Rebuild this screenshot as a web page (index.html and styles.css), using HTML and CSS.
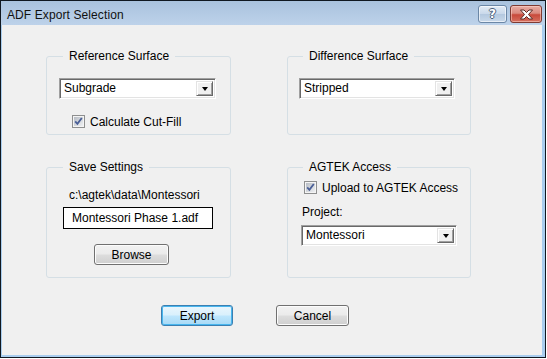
FILE: index.html
```html
<!DOCTYPE html>
<html>
<head>
<meta charset="utf-8">
<link rel="stylesheet" href="styles.css">
</head>
<body>
<div class="window">
  <div class="titlebar">
    <span class="title">ADF Export Selection</span>
    <div class="tb-buttons">
      <div class="tb-help"><span>?</span></div>
      <div class="tb-close">
        <svg width="15" height="11" viewBox="0 0 15 11"><path d="M1.5 1 H5 L7.5 3.5 L10 1 H13.5 L9.5 5.5 L13.5 10 H10 L7.5 7.5 L5 10 H1.5 L5.5 5.5 Z" fill="#fff" stroke="#5a2a24" stroke-width="1" stroke-linejoin="round"/></svg>
      </div>
    </div>
  </div>
  <div class="client">
    <div class="groups">
      <fieldset class="group">
        <legend>Reference Surface</legend>
        <div class="combo combo-ref"><span class="combo-text">Subgrade</span><span class="combo-btn"><i class="arrow"></i></span></div>
        <label class="check check-cutfill"><span class="box"><svg width="13" height="13" viewBox="0 0 13 13"><rect x="0.5" y="0.5" width="12" height="12" fill="#f4f4f4" stroke="#8e8f8f"/><rect x="2" y="2" width="9" height="9" fill="url(#g1)"/><defs><linearGradient id="g1" x1="0" y1="0" x2="1" y2="1"><stop offset="0" stop-color="#b7bcc4"/><stop offset="1" stop-color="#eef0f2"/></linearGradient></defs><path d="M3.2 6.4 L5.4 8.8 L9.8 3" fill="none" stroke="#4a5f97" stroke-width="1.8"/></svg></span>Calculate Cut-Fill</label>
      </fieldset>
      <fieldset class="group group-right">
        <legend>Difference Surface</legend>
        <div class="combo combo-diff"><span class="combo-text">Stripped</span><span class="combo-btn"><i class="arrow"></i></span></div>
      </fieldset>
      <fieldset class="group">
        <legend>Save Settings</legend>
        <div class="path">c:\agtek\data\Montessori</div>
        <div class="textbox">Montessori Phase 1.adf</div>
        <button class="btn btn-browse">Browse</button>
      </fieldset>
      <fieldset class="group group-right">
        <legend>AGTEK Access</legend>
        <label class="check check-upload"><span class="box"><svg width="13" height="13" viewBox="0 0 13 13"><rect x="0.5" y="0.5" width="12" height="12" fill="#f4f4f4" stroke="#8e8f8f"/><rect x="2" y="2" width="9" height="9" fill="url(#g2)"/><defs><linearGradient id="g2" x1="0" y1="0" x2="1" y2="1"><stop offset="0" stop-color="#b7bcc4"/><stop offset="1" stop-color="#eef0f2"/></linearGradient></defs><path d="M3.2 6.4 L5.4 8.8 L9.8 3" fill="none" stroke="#4a5f97" stroke-width="1.8"/></svg></span>Upload to AGTEK Access</label>
        <div class="project-label">Project:</div>
        <div class="combo combo-proj"><span class="combo-text">Montessori</span><span class="combo-btn"><i class="arrow"></i></span></div>
      </fieldset>
    </div>
    <div class="actions">
      <button class="btn btn-default">Export</button>
      <button class="btn btn-cancel">Cancel</button>
    </div>
  </div>
</div>
</body>
</html>
```
FILE: styles.css
```css
* { box-sizing: border-box; }
html, body { margin: 0; padding: 0; background: #ffffff; }
body {
  font-family: "Liberation Sans", Arial, sans-serif;
  font-size: 12px;
  color: #000;
}
.window {
  width: 546px;
  height: 358px;
  border: 1px solid #101820;
  background: linear-gradient(#a9c2dd 0px, #bdd2ea 24px, #a9cdee 24px);
  padding: 0 3px 2px 1px;
  display: flex;
  flex-direction: column;
}
.titlebar {
  height: 24px;
  flex: none;
  display: flex;
  align-items: center;
  justify-content: space-between;
}
.title {
  font-size: 12px;
  letter-spacing: 0.1px;
  padding-left: 5px;
  padding-top: 3px;
  color: #111;
}
.tb-buttons {
  display: flex;
  gap: 3px;
  margin-top: 2px;
}
.tb-help {
  width: 29px;
  height: 18px;
  border: 1px solid #6b87a6;
  border-radius: 3px;
  background: linear-gradient(#e3ecf5 0%, #c8d8ea 50%, #b3c8df 51%, #c9d9ea 100%);
  box-shadow: inset 0 0 0 1px rgba(255,255,255,0.6);
  display: flex;
  align-items: center;
  justify-content: center;
}
.tb-help span {
  font-family: "DejaVu Sans", sans-serif;
  font-weight: bold;
  font-size: 12px;
  color: #fff;
  text-shadow: 1px 0 0 #4a5f7a, -1px 0 0 #4a5f7a, 0 1px 0 #4a5f7a, 0 -1px 0 #4a5f7a;
  line-height: 1;
}
.tb-close {
  width: 32px;
  height: 18px;
  border: 1px solid #7e3a32;
  border-radius: 3px;
  background: linear-gradient(#e9aca3 0%, #d98a7f 45%, #c8493b 55%, #d5705f 100%);
  box-shadow: inset 0 0 0 1px rgba(255,220,210,0.5);
  display: flex;
  align-items: center;
  justify-content: center;
}
.client {
  flex: 1;
  background: #f0f0f0;
  padding: 24px 0 0 44px;
}
.groups {
  display: grid;
  grid-template-columns: 185px 184px;
  grid-template-rows: 86px 118px;
  column-gap: 56px;
  row-gap: 25px;
}
.group {
  margin: 0;
  padding: 0;
  border: 1px solid #d5dfe5;
  border-radius: 3px;
  height: 100%;
  min-width: 0;
}
.group legend {
  margin-left: 16px;
  padding: 0 6px;
  line-height: 14px;
  height: 14px;
}
.group-right legend { margin-left: 15px; }

.combo {
  height: 21px;
  display: flex;
  background: #fff;
  border-top: 1px solid #a0a0a0;
  border-left: 1px solid #a0a0a0;
  border-bottom: 1px solid #fff;
  border-right: 1px solid #fff;
  box-shadow: inset 1px 1px 0 #696969, inset -1px -1px 0 #e3e3e3;
  padding: 2px;
}
.combo-text {
  flex: 1;
  padding-left: 2px;
  line-height: 15px;
}
.combo-btn {
  width: 17px;
  background: #f0f0f0;
  border-top: 1px solid #e3e3e3;
  border-left: 1px solid #e3e3e3;
  border-right: 1px solid #696969;
  border-bottom: 1px solid #696969;
  box-shadow: inset 1px 1px 0 #fff, inset -1px -1px 0 #a0a0a0;
  display: flex;
  align-items: center;
  justify-content: center;
}
.arrow {
  width: 0;
  height: 0;
  border-left: 3.5px solid transparent;
  border-right: 3.5px solid transparent;
  border-top: 4px solid #000;
  margin-top: 1px;
}
.combo-ref { margin: 15px 0 0 12px; width: 157px; }
.combo-diff { margin: 15px 0 0 11px; width: 156px; }
.combo-proj { margin: 6px 0 0 13px; width: 156px; }

.check {
  display: flex;
  align-items: center;
  height: 13px;
}
.check .box { width: 13px; height: 13px; margin-right: 5px; display: block; }
.check .box svg { display: block; }
.check-cutfill { margin: 16px 0 0 25px; }
.check-upload { margin: 7px 0 0 16px; }

.project-label {
  margin: 11px 0 0 14px;
  line-height: 14px;
}

.path {
  margin: 14px 0 0 22px;
  line-height: 14px;
}
.textbox {
  margin: 5px 0 0 16px;
  width: 150px;
  height: 22px;
  border: 1px solid #000;
  box-shadow: inset 0 0 0 1px #fff;
  background: #fff;
  padding-left: 8px;
  line-height: 20px;
}

.btn {
  font-family: "Liberation Sans", Arial, sans-serif;
  font-size: 12px;
  color: #000;
  height: 21px;
  border: 1px solid #707070;
  border-radius: 3px;
  background: linear-gradient(#f2f2f2 0%, #ebebeb 48%, #dddddd 52%, #cfcfcf 100%);
  box-shadow: inset 0 0 0 1px #fcfcfc;
  padding: 0;
  display: block;
}
.btn-browse {
  width: 75px;
  margin: 15px 0 0 47px;
}
.actions {
  display: flex;
  gap: 43px;
  margin: 27px 0 0 115px;
}
.btn-default {
  width: 72px;
  border-color: #3c7fb1;
  background: linear-gradient(#eaf6fd 0%, #d9f0fc 48%, #bee6fd 52%, #a7d9f5 100%);
  box-shadow: inset 0 0 0 1px #48b6ee;
}
.btn-cancel { width: 73px; }
```
